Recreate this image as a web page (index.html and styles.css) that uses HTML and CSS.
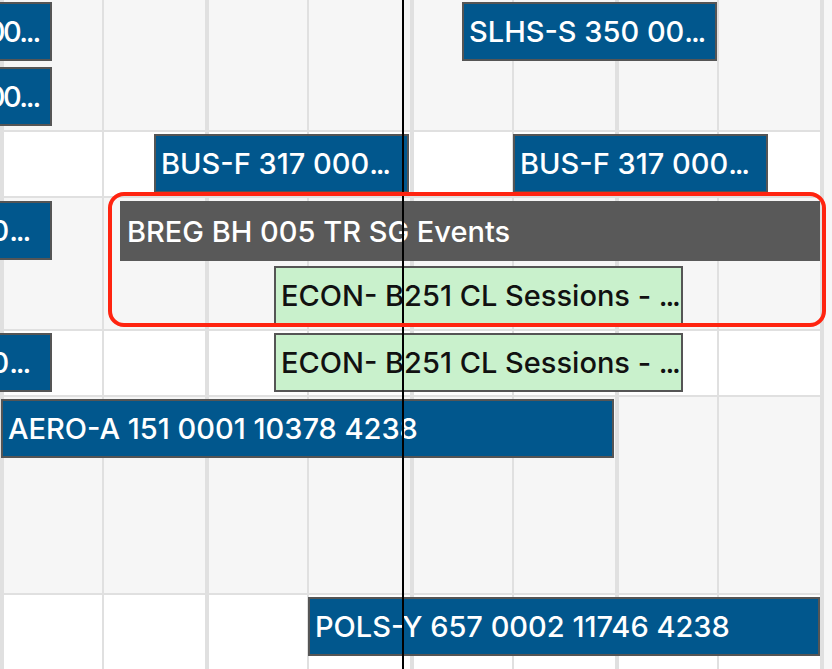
FILE: index.html
```html
<!DOCTYPE html>
<html lang="en">
<head>
<meta charset="utf-8">
<title>Room schedule</title>
<link rel="stylesheet" href="styles.css">
</head>
<body>
<div class="timeline">
  <div class="row row-a shade">
    <div class="ev ev-blue stub stub-long" style="top:2px"><span class="label">000<span class="dots">...</span></span></div>
    <div class="ev ev-blue stub stub-long" style="top:67px"><span class="label">000<span class="dots">...</span></span></div>
    <div class="ev ev-blue" style="top:2px;left:462px;width:255px"><span class="label">SLHS-S 350 00<span class="dots">...</span></span></div>
  </div>
  <div class="row row-b">
    <div class="ev ev-blue" style="top:2px;left:154px;width:255px"><span class="label">BUS-F 317 000<span class="dots">...</span></span></div>
    <div class="ev ev-blue" style="top:2px;left:513px;width:255px"><span class="label">BUS-F 317 000<span class="dots">...</span></span></div>
  </div>
  <div class="row row-c shade">
    <div class="ev ev-blue stub stub-short" style="top:3px"><span class="label">00<span class="dots">...</span></span></div>
    <div class="ev ev-dark" style="top:3px;left:120px;width:700px"><span class="label">BREG BH 005 TR SG Events</span></div>
    <div class="ev ev-green" style="top:68px;left:274px;width:409px"><span class="label">ECON- B251 CL Sessions - <span class="dots">...</span></span></div>
  </div>
  <div class="row row-d">
    <div class="ev ev-blue stub stub-short" style="top:2px"><span class="label">00<span class="dots">...</span></span></div>
    <div class="ev ev-green" style="top:2px;left:274px;width:409px"><span class="label">ECON- B251 CL Sessions - <span class="dots">...</span></span></div>
  </div>
  <div class="row row-e shade">
    <div class="ev ev-blue" style="top:2px;left:1px;width:613px"><span class="label">AERO-A 151 0001 10378 4238</span></div>
  </div>
  <div class="row row-f">
    <div class="ev ev-blue" style="top:2px;left:308px;width:512px"><span class="label">POLS-Y 657 0002 11746 4238</span></div>
  </div>
  <div class="now-line"></div>
  <div class="highlight"></div>
</div>
</body>
</html>
```
FILE: styles.css
```css
html, body {
  margin: 0;
  padding: 0;
  height: 100%;
  overflow: hidden;
  background: #f7f7f7;
}

body {
  font-family: "Inter", "Noto Sans", sans-serif;
}

.timeline {
  position: relative;
  width: 824px;
  height: 669px;
  display: flex;
  flex-direction: column;
}

.row {
  position: relative;
  flex: none;
  background-color: #ffffff;
  background-image: repeating-linear-gradient(to right,
    #e0e0e0 0 4px,
    transparent 4px 102px,
    #e0e0e0 102px 104px,
    transparent 104px 205px);
  border-bottom: 2px solid #e0e0e0;
}

.row.shade {
  background-color: #f6f6f6;
}

.row-a { height: 130px; }
.row-b { height: 64px; }
.row-c { height: 131px; }
.row-d { height: 64px; }
.row-e { height: 196px; }
.row-f { flex: 1; border-bottom: none; }

.ev {
  position: absolute;
  box-sizing: border-box;
  height: 59px;
  display: flex;
  align-items: center;
  padding: 0 3px 0 5px;
  border: 2px solid #555555;
  font-size: 29px;
  font-weight: 500;
  white-space: nowrap;
  overflow: hidden;
}

.label {
  flex: none;
}

.dots {
  letter-spacing: -2.2px;
  margin-right: 2px;
}

.ev-blue {
  background: #01578d;
  color: #ffffff;
}

.ev-dark {
  background: #595959;
  border-color: #595959;
  color: #ffffff;
  height: 60px;
}

.ev-green {
  background: #c9f1cc;
  color: #111111;
}

.stub {
  left: -203px;
  width: 255px;
  justify-content: flex-end;
}

.stub-long { padding-right: 9px; }
.stub-long .label { letter-spacing: -2.5px; }
.stub-long .dots { letter-spacing: -2.2px; }
.stub-short { padding-right: 19px; }

.now-line {
  position: absolute;
  top: 0;
  bottom: 0;
  left: 402px;
  width: 2px;
  background: #000000;
  z-index: 3;
}

.highlight {
  position: absolute;
  left: 108px;
  top: 192px;
  width: 718px;
  height: 135px;
  box-sizing: border-box;
  border: 4px solid #ff2410;
  border-radius: 16px;
  z-index: 4;
  pointer-events: none;
}
```
